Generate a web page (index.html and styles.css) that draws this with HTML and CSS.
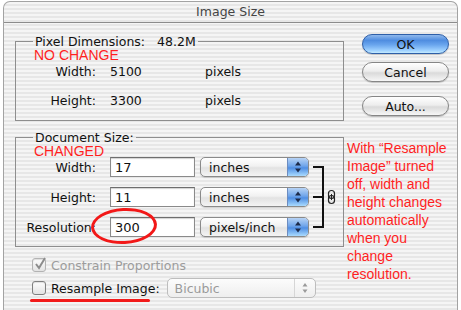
FILE: index.html
```html
<!DOCTYPE html>
<html lang="en">
<head>
  <meta charset="UTF-8">
  <meta name="viewport" content="width=device-width, initial-scale=1.0">
  <title>Image Size</title>
  <link rel="stylesheet" href="styles.css">
</head>
<body>
  <div class="window">
    <div class="titlebar">Image Size</div>
    <div class="content">
      <div class="main">
        <fieldset class="group pixel">
          <legend><span>Pixel Dimensions:</span><span class="total">48.2M</span></legend>
          <div class="note">NO CHANGE</div>
          <div class="rows">
            <div class="label">Width:</div>
            <div class="value">5100</div>
            <div class="unit">pixels</div>
            <div class="label">Height:</div>
            <div class="value">3300</div>
            <div class="unit">pixels</div>
          </div>
        </fieldset>

        <fieldset class="group doc">
          <legend>Document Size:</legend>
          <div class="note">CHANGED</div>
          <div class="fields">
            <svg class="link" width="30" height="80" viewBox="0 0 30 80">
              <path d="M4 10 H14 V70 H4 M4 40 H14" fill="none" stroke="#111" stroke-width="2"/>
              <rect x="19.5" y="33.5" width="6" height="8" rx="3" fill="none" stroke="#222" stroke-width="1.2"/>
              <rect x="19.5" y="38.5" width="6" height="8" rx="3" fill="none" stroke="#222" stroke-width="1.2"/>
              <line x1="22.5" y1="37" x2="22.5" y2="43" stroke="#222" stroke-width="1"/>
            </svg>

            <div class="label">Width:</div>
            <div class="field">17</div>
            <div class="popup"><span>inches</span><span class="arrows"><svg width="20" height="18" viewBox="0 0 20 18"><path d="M7 7.5 L10 3.5 L13 7.5 Z M7 10.5 L10 14.5 L13 10.5 Z" fill="#1c2a4a"/></svg></span></div>

            <div class="label">Height:</div>
            <div class="field">11</div>
            <div class="popup"><span>inches</span><span class="arrows"><svg width="20" height="18" viewBox="0 0 20 18"><path d="M7 7.5 L10 3.5 L13 7.5 Z M7 10.5 L10 14.5 L13 10.5 Z" fill="#1c2a4a"/></svg></span></div>

            <div class="label">Resolution:</div>
            <div class="field">300</div>
            <div class="popup"><span>pixels/inch</span><span class="arrows"><svg width="20" height="18" viewBox="0 0 20 18"><path d="M7 7.5 L10 3.5 L13 7.5 Z M7 10.5 L10 14.5 L13 10.5 Z" fill="#1c2a4a"/></svg></span></div>

            <div class="circle"></div>
          </div>
        </fieldset>

        <div class="options">
          <div class="check-row disabled">
            <span class="box"><svg width="14" height="14" viewBox="0 0 14 14"><path d="M3 7 L6 11 L12 1" fill="none" stroke="#8c8c8c" stroke-width="2"/></svg></span>
            <span>Constrain Proportions</span>
          </div>
          <div class="check-row">
            <span class="box"></span>
            <span>Resample Image:</span>
            <div class="popup off"><span>Bicubic</span><span class="arrows"><svg width="20" height="18" viewBox="0 0 20 18"><path d="M7.5 7.5 L10 4 L12.5 7.5 Z M7.5 10.5 L10 14 L12.5 10.5 Z" fill="#9a9a9a"/></svg></span></div>
            <div class="underline"></div>
          </div>
        </div>
      </div>

      <div class="side">
        <button class="btn default">OK</button>
        <button class="btn">Cancel</button>
        <button class="btn auto">Auto...</button>
        <p class="remark">With “Resample<br>Image” turned<br>off, width and<br>height changes<br>automatically<br>when you<br>change<br>resolution.</p>
      </div>
    </div>
  </div>
</body>
</html>
```

FILE: styles.css
```css
body {
  margin: 0;
  background: #fff;
  font-family: "DejaVu Sans", sans-serif;
  font-size: 12.5px;
  color: #111;
  overflow: hidden;
}

.window {
  margin: 1px 3px 0;
  height: 309px;
  border: 1px solid #a3a3a3;
  border-bottom: none;
  border-radius: 7px 7px 0 0;
  overflow: hidden;
  background: repeating-linear-gradient(to bottom, #f5f5f5 0, #f5f5f5 2px, #e7e7e7 2px, #e7e7e7 4px);
}

.titlebar {
  height: 20px;
  line-height: 20px;
  text-align: center;
  color: #444;
  border-bottom: 1px solid #8c8c8c;
}

.content {
  display: flex;
  padding: 12px 0 0 11px;
}

.main {
  width: 329px;
}

.group {
  margin: 0;
  padding: 0 0 10px;
  min-width: 0;
  border: 1px solid #8e8e8e;
}

.group legend {
  margin-left: 17px;
  padding: 0 2px;
  line-height: 13px;
}

.total {
  margin-left: 12px;
}

.note {
  padding: 1px 0 0 18px;
  font-family: "Liberation Sans", Arial, sans-serif;
  font-size: 14px;
  line-height: 12px;
  color: #ff1f1f;
}

.rows,
.fields {
  display: grid;
  grid-template-columns: 94px 95px 1fr;
  grid-template-rows: 20px 20px;
  row-gap: 9px;
  align-items: center;
}

.label {
  padding-right: 14px;
  text-align: right;
}

.doc {
  margin-top: 10px;
  padding-bottom: 9px;
}

.fields {
  position: relative;
  grid-template-columns: 94px 90px 109px 30px;
  grid-template-rows: 20px 20px 20px;
  row-gap: 10px;
}

.link {
  grid-column: 4;
  grid-row: 1 / 4;
}

.field {
  width: 85px;
  height: 20px;
  box-sizing: border-box;
  padding-left: 4px;
  line-height: 19px;
  font-size: 13px;
  background: #fff;
  border: 1px solid #8a8a8a;
  border-top-color: #6e6e6e;
  box-shadow: inset 0 1px 1px rgba(0, 0, 0, 0.18);
}

.popup {
  display: flex;
  align-items: center;
  justify-content: space-between;
  height: 20px;
  box-sizing: border-box;
  padding-left: 8px;
  border: 1px solid #8a8a8a;
  border-radius: 5px;
  overflow: hidden;
  background: linear-gradient(to bottom, #ffffff 0%, #f1f1f1 45%, #e2e2e2 55%, #f4f4f4 100%);
  box-shadow: 0 1px 1px rgba(0, 0, 0, 0.15);
}

.arrows {
  display: flex;
  align-items: center;
  width: 20px;
  height: 18px;
  border-left: 1px solid #6c8cc0;
  background: linear-gradient(to bottom, #b7d3f5 0%, #6ea4ea 45%, #4f8ee3 55%, #a9dbff 100%);
}

.options {
  margin-top: 10px;
  padding-left: 17px;
}

.check-row {
  position: relative;
  display: flex;
  align-items: center;
  gap: 5px;
  height: 16px;
}

.check-row + .check-row {
  margin-top: 5px;
  height: 20px;
}

.disabled {
  color: #9c9c9c;
}

.box {
  width: 14px;
  height: 14px;
  box-sizing: border-box;
  border: 1px solid #7f7f7f;
  border-radius: 3px;
  background: linear-gradient(to bottom, #fdfdfd, #e3e3e3);
  box-shadow: inset 0 1px 1px rgba(0, 0, 0, 0.12);
}

.box svg {
  display: block;
  margin: -2px 0 0 0;
}

.disabled .box {
  border-color: #b3b3b3;
}

.popup.off {
  width: 149px;
  margin-left: 2px;
  padding-left: 7px;
  color: #9a9a9a;
  border-color: #bdbdbd;
  background: linear-gradient(to bottom, #fcfcfc, #eeeeee);
  box-shadow: none;
}

.popup.off .arrows {
  border-left: 1px solid #d6d6d6;
  background: transparent;
}

.underline {
  position: absolute;
  left: -2px;
  top: 21px;
  width: 120px;
  height: 3px;
  background: #f21c1c;
  border-radius: 2px;
}

.circle {
  position: absolute;
  left: 75px;
  top: 51px;
  width: 66px;
  height: 36px;
  box-sizing: border-box;
  border: 3px solid #f21818;
  border-radius: 50%;
  transform: rotate(-3deg);
}

.side {
  display: flex;
  flex-direction: column;
  margin: -1px 0 0 3px;
}

.btn {
  width: 87px;
  height: 20px;
  margin-left: 15px;
  padding: 0;
  font-family: "DejaVu Sans", sans-serif;
  font-size: 12.5px;
  color: #111;
  border: 1px solid #868686;
  border-radius: 10px;
  background: linear-gradient(to bottom, #ffffff 0%, #ededed 45%, #dadada 55%, #f6f6f6 100%);
  box-shadow: 0 1px 1px rgba(0, 0, 0, 0.2);
}

.btn + .btn {
  margin-top: 8px;
}

.btn.auto {
  margin-top: 14px;
}

.btn.default {
  border-color: #2e5fa8;
  background: linear-gradient(to bottom, #8fb8ec 0%, #4f8de0 30%, #6aa6ee 55%, #9dd0ff 85%, #c4ebff 100%);
}

.remark {
  margin: 23px 0 0;
  font-family: "Liberation Sans", Arial, sans-serif;
  font-size: 14px;
  line-height: 18px;
  color: #ff1f1f;
  white-space: nowrap;
}
```
